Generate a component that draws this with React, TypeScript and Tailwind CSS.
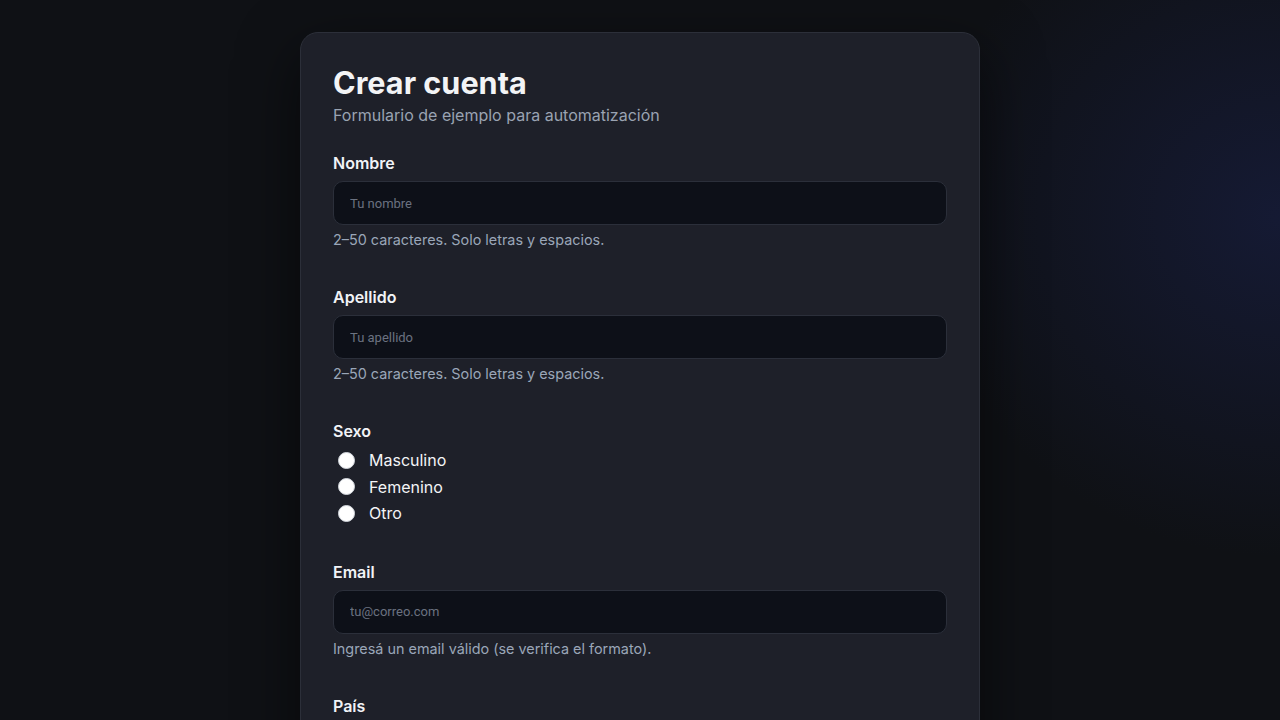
import React from "react";

function Field({ label, placeholder, help, type = "text" }: { label: string; placeholder: string; help: string; type?: string }) {
  return (
    <div className="flex flex-col">
      <label className="text-base font-semibold leading-6 text-[#f1f3f7]">{label}</label>
      <input
        type={type}
        placeholder={placeholder}
        className="mt-[6px] h-[44px] w-full rounded-[10px] border border-[#2b2f3a] bg-[#0d1018] px-4 text-[13px] text-[#e5e7eb] outline-none placeholder:text-[#6b7280] [font-family:Roboto,'Liberation_Sans',sans-serif]"
      />
      <p className="mt-[5px] text-[14.4px] leading-5 text-[#9aa6b8]">{help}</p>
    </div>
  );
}

function Radio({ label }: { label: string }) {
  return (
    <label className="flex h-[26.5px] items-center pl-[5px]">
      <span className="h-[17px] w-[17px] rounded-full border border-[#d1d5db] bg-white" />
      <span className="ml-[14px] text-base text-[#f3f4f6]">{label}</span>
    </label>
  );
}

export default function App() {
  return (
    <div
      className="min-h-screen w-full bg-[#0f1115] [font-family:Inter,'Noto_Sans',sans-serif]"
      style={{ backgroundImage: "radial-gradient(ellipse 360px 340px at 100% 26%, rgba(25,32,72,0.6), rgba(15,17,21,0) 100%)" }}
    >
      <div className="flex justify-center pt-8">
        <div className="w-[680px] rounded-[18px] border border-[#2c2f39] bg-[#1e2029] px-8 pt-8 pb-10 shadow-[0_20px_60px_rgba(0,0,0,0.55)]">
          <h1 className="text-[30.6px] font-bold leading-9 text-[#f3f4f6]">Crear cuenta</h1>
          <p className="mt-[2px] text-base leading-6 text-[#9aa3b2]">Formulario de ejemplo para automatización</p>

          <div className="mt-[24px] flex flex-col gap-[35px]">
            <Field label="Nombre" placeholder="Tu nombre" help="2–50 caracteres. Solo letras y espacios." />
            <Field label="Apellido" placeholder="Tu apellido" help="2–50 caracteres. Solo letras y espacios." />
            <div className="-mb-[2px] flex flex-col">
              <span className="text-base font-semibold leading-6 text-[#f1f3f7]">Sexo</span>
              <div className="mt-[4px] flex flex-col">
                <Radio label="Masculino" />
                <Radio label="Femenino" />
                <Radio label="Otro" />
              </div>
            </div>
            <Field label="Email" type="email" placeholder="tu@correo.com" help="Ingresá un email válido (se verifica el formato)." />
            <Field label="País" placeholder="Tu país" help="Seleccioná tu país." />
          </div>
        </div>
      </div>
    </div>
  );
}
